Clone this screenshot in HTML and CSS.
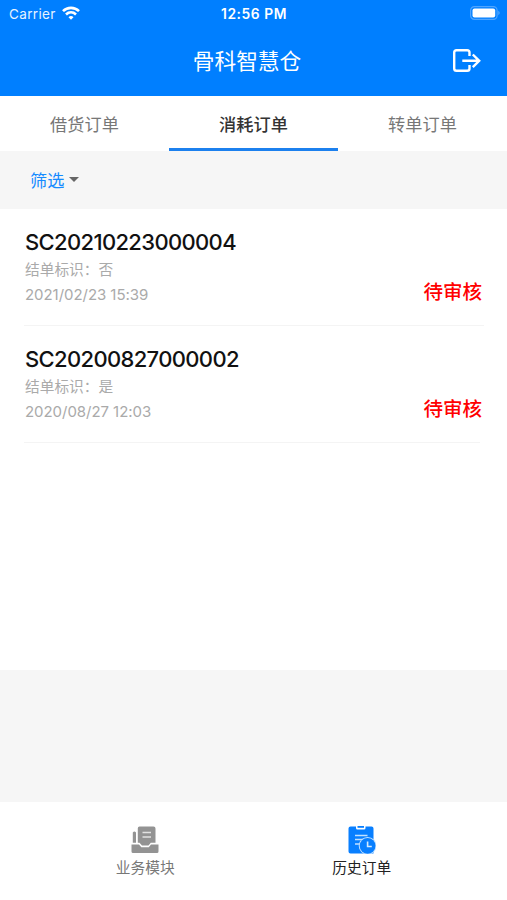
FILE: index.html
```html
<!DOCTYPE html>
<html lang="zh-CN">
<head>
<meta charset="utf-8">
<title>骨科智慧仓</title>
<link rel="stylesheet" href="styles.css">
</head>
<body>
<header class="header">
  <div class="status-bar">
    <div class="carrier"><span>Carrier</span>
      <svg class="wifi" width="18" height="14" viewBox="0 0 18 14" fill="none" stroke="#fff" stroke-width="2.6"><path d="M1 5.2C5.5.7 12.500.7 17 5.200"/><path d="M4 8.500C6.900 5.700 11.100 5.700 14 8.500"/><path d="M6.500 11.200C7.900 9.700 10.100 9.700 11.500 11.200L9 13.700Z" fill="#fff" stroke="none"/></svg>
    </div>
    <span class="clock">12:56 PM</span>
    <svg class="battery" width="31" height="14" viewBox="0 0 31 14"><rect x=".6" y=".6" width="26.500" height="12.800" rx="3.800" fill="none" stroke="#4fa5ff" stroke-width="1.200"/><rect x="2.500" y="2.500" width="22.700" height="9" rx="2" fill="#fff"/><path d="M28.500 4.800Q30.500 7 28.500 9.200Z" fill="#79baff"/></svg>
  </div>
  <div class="title-bar">
    <h1 class="title">骨科智慧仓</h1>
    <svg class="logout" width="30" height="26" viewBox="0 0 30 26" fill="none" stroke="#fff" stroke-width="2.400"><path d="M17.500 8V4.500Q17.500 2.200 15.200 2.200H4.500Q2.200 2.200 2.200 4.500V20.500Q2.200 22.800 4.500 22.800H15.200Q17.500 22.800 17.500 20.500V17"/><path d="M10.300 12.800H27M20.800 6.500L27.200 12.800L20.800 19.100"/></svg>
  </div>
</header>
<nav class="tabs">
  <div class="tab">借货订单</div>
  <div class="tab tab-active">消耗订单</div>
  <div class="tab">转单订单</div>
</nav>
<div class="filter"><span>筛选</span><i class="caret"></i></div>
<main class="orders">
  <article class="order">
    <div class="details"><h2 class="number">SC20210223000004</h2><p class="flag">结单标识：否</p><p class="date">2021/02/23 15:39</p></div>
    <span class="state">待审核</span>
  </article>
  <article class="order order-last">
    <div class="details"><h2 class="number">SC20200827000002</h2><p class="flag">结单标识：是</p><p class="date">2020/08/27 12:03</p></div>
    <span class="state">待审核</span>
  </article>
</main>
<footer class="footer">
  <div class="nav-item">
    <svg width="28" height="28" viewBox="0 0 28 28"><path d="M8.500.500H22.500Q24.500.500 24.500 2.500V16.800H19.800L17.500 19.500H11L8.500 16.800H6.800V2.200Q6.800.500 8.500.500Z" fill="#939393"/><path d="M1.800 6.500Q3.400 4.500 5 6.500V16.800H1.800Z" fill="#939393"/><path d="M11.500 6.500H20M11.500 11H20" stroke="#e2e2e2" stroke-width="1.600"/><path d="M.500 18.500H8L10.300 21.200H17.800L20 18.500H27.500V25.500Q27.500 27 26 27H2Q.500 27 .500 25.500Z" fill="#939393"/></svg>
    <span>业务模块</span>
  </div>
  <div class="nav-item nav-active">
    <svg width="28" height="28" viewBox="0 0 28 28"><path d="M2.500.500H8V2Q8 3.500 9.500 3.500H16Q17.500 3.500 17.500 2V.500H23.500Q25.500.500 25.500 2.500V27.500H2.500Q.500 27.500.500 25.500V2.500Q.500.500 2.500.500Z" fill="#087fff"/><path d="M9.500 0H16V1.800H9.500Z" fill="#087fff"/><path d="M7 9.500H19.500M7 13.500H15M7 18H12" stroke="#c2e1ff" stroke-width="1.500"/><circle cx="19.600" cy="19.800" r="8.900" fill="#c6e2ff"/><circle cx="19.600" cy="19.800" r="7.900" fill="#087fff"/><path d="M19.600 15.500V20.500H23.800" fill="none" stroke="#d4eaff" stroke-width="1.600"/></svg>
    <span>历史订单</span>
  </div>
</footer>
</body>
</html>
```
FILE: styles.css
```css
* { box-sizing: border-box; }
body {
  margin: 0;
  height: 900px;
  display: flex;
  flex-direction: column;
  background: #f6f6f6;
  font-family: Inter, "Noto Sans CJK SC", sans-serif;
}
h1, h2, p { margin: 0; }
svg { display: block; flex: none; }
.header { height: 96px; background: #007fff; color: #fff; }
.status-bar {
  height: 28px;
  display: grid;
  grid-template-columns: 1fr auto 1fr;
  align-items: center;
  padding: 0 7px 0 9px;
  font-size: 13.5px;
}
.carrier { display: flex; align-items: center; gap: 6px; letter-spacing: .35px; color: #e6f3ff; }
.wifi { margin-top: -3px; }
.clock { font-weight: 600; letter-spacing: .55px; font-size: 13.8px; margin-right: 1px; }
.battery { justify-self: end; margin-top: -2px; margin-right: -1px; }
.title-bar {
  height: 66px;
  display: grid;
  grid-template-columns: 1fr auto 1fr;
  align-items: center;
  padding: 0 25px 0 12px;
}
.title { grid-column: 2; font-size: 21.7px; line-height: 32px; font-weight: 400; }
.logout { justify-self: end; }
.tabs { height: 55px; display: flex; background: #fff; }
.tab {
  flex: 1;
  text-align: center;
  font-size: 17.2px;
  line-height: 58px;
  color: #777;
}
.tab-active { color: #333; font-weight: 500; border-bottom: 3px solid #1c80ee; }
.filter {
  height: 58px;
  display: flex;
  align-items: center;
  gap: 5px;
  padding: 0 0 1px 30px;
  color: #168bff;
  font-size: 17.2px;
}
.caret { border: 5px solid transparent; border-top-color: #666; border-bottom: 0; }
.orders { height: 461px; background: #fff; padding: 0 23px 0 24px; }
.order {
  height: 117px;
  display: flex;
  justify-content: space-between;
  border-bottom: 1px solid #f4f4f4;
  padding: 18px 2px 0 1px;
}
.order-last { margin-right: 4px; padding-right: 0; }
.order-last .state { margin-right: -2px; }
.number { font-size: 22px; line-height: 30px; font-weight: 500; color: #111; white-space: nowrap; letter-spacing: -.65px; }
.flag { font-size: 14.7px; line-height: 26px; color: #aaa; }
.date { font-size: 15px; line-height: 23px; color: #aaa; letter-spacing: -.05px; }
.state { margin-top: 50px; font-size: 19.5px; line-height: 30px; font-weight: 500; color: #f00; }
.footer {
  height: 98px;
  margin-top: auto;
  display: flex;
  justify-content: center;
  background: #fff;
}
.nav-item {
  width: 216.500px;
  padding-top: 24px;
  display: flex;
  flex-direction: column;
  align-items: center;
  font-size: 14.7px;
  line-height: 28px;
  color: #777;
}
.nav-active { color: #222; }
```
